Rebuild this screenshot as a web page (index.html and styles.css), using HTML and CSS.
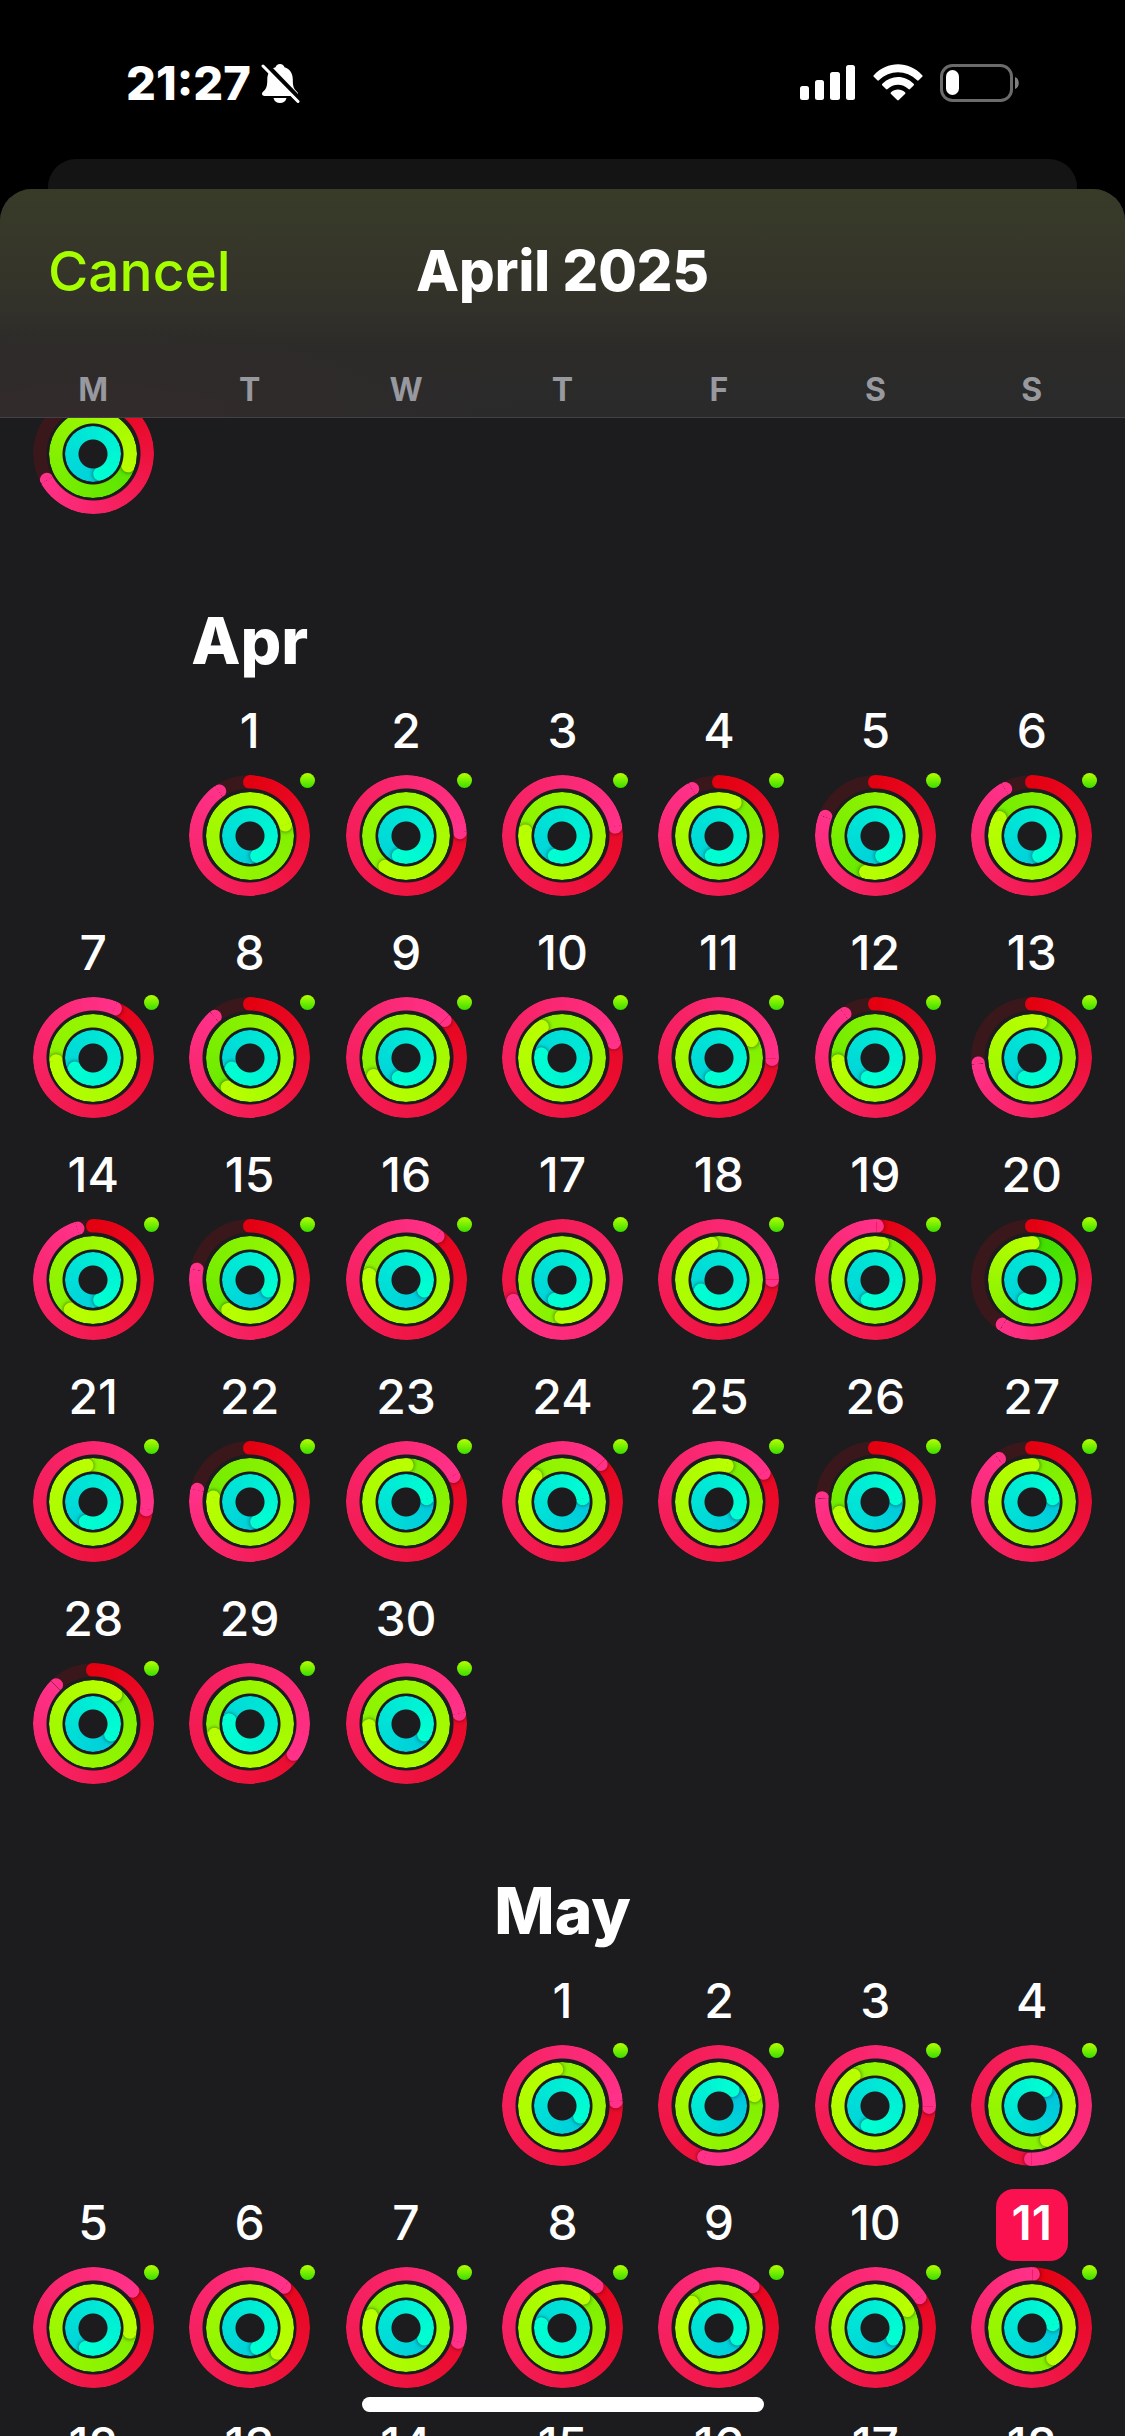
FILE: index.html
```
<!DOCTYPE html>
<html lang="en">
<head>
    <meta charset="UTF-8">
    <meta name="viewport" content="width=device-width, initial-scale=1.0">
    <title>Activity Calendar</title>
    <link rel="stylesheet" href="styles.css">
</head>
<body>
    <div class="status-bar">
        <div class="status-left">
            <span class="time">21:27</span>
            <svg class="bell" viewBox="0 0 40 42" width="40" height="42">
                <path d="M20 2c2.400 0 4 1.500 4.500 3.300 5.500 1.800 8.300 6.200 8.300 12 0 8 1.200 9.700 4.400 12.700 1.600 1.600.8 4-1.600 4H4.600c-2.600 0-3.400-2.600-1.600-4.200 3.200-2.900 4.300-5 4.300-12.500 0-5.800 2.700-10.200 8.200-12C16 3.500 17.600 2 20 2z" fill="#fff"/>
                <path d="M13.500 36h13c-.6 3.300-3.300 5-6.500 5s-5.900-1.700-6.500-5z" fill="#fff"/>
                <path d="M5 1.500l35 36" stroke="#000" stroke-width="5"/>
                <path d="M3 4l35 35.500" stroke="#fff" stroke-width="3" stroke-linecap="round"/>
            </svg>
        </div>
        <div class="status-right">
            <svg viewBox="0 0 56 36" width="56" height="36" fill="#fff">
                <rect x="0" y="21" width="9" height="14" rx="2.500"/>
                <rect x="15" y="15" width="9" height="20" rx="2.500"/>
                <rect x="30" y="7" width="10" height="28" rx="2.500"/>
                <rect x="46" y="0" width="9" height="35" rx="2.500"/>
            </svg>
            <svg viewBox="0 0 50 37" width="50" height="37" fill="#fff">
                <path d="M.8 11.200C14.500-3.300 35.500-3.300 49.200 11.200c.6.6.6 1 0 1.600l-3.500 3.500c-.6.6-1 .6-1.600 0-10.800-10.800-27.400-10.800-38.200 0-.6.6-1 .6-1.600 0L.8 12.800c-.6-.6-.6-1 0-1.600z"/>
                <path d="M9.400 19.800c8.800-9.100 22.400-9.100 31.200 0 .6.600.6 1 0 1.600l-3.600 3.600c-.6.600-1 .6-1.600 0-5.900-5.700-14.900-5.700-20.800 0-.6.600-1 .6-1.600 0l-3.600-3.600c-.6-.6-.6-1 0-1.600z"/>
                <path d="M18 28.300c4-3.800 10-3.800 14 0 .6.600.6 1 0 1.600l-6.200 6.200c-.6.600-1 .6-1.600 0L18 29.900c-.6-.6-.6-1 0-1.600z"/>
            </svg>
            <svg viewBox="0 0 80 38" width="80" height="38">
                <rect x="1.500" y="1.500" width="70" height="35" rx="11" fill="none" stroke="#6b6b6b" stroke-width="3"/>
                <rect x="6" y="6" width="13" height="25" rx="6.500" fill="#fff"/>
                <path d="M75 13c5 1.500 5 10.500 0 12z" fill="#808080"/>
            </svg>
        </div>
    </div>

    <div class="back-sheet"></div>

    <div class="sheet">
        <header class="sheet-header">
            <div class="title-bar">
                <button class="cancel" type="button">Cancel</button>
                <h1>April 2025</h1>
            </div>
            <div class="weekdays">
                <span>M</span>
                <span>T</span>
                <span>W</span>
                <span>T</span>
                <span>F</span>
                <span>S</span>
                <span>S</span>
            </div>
        </header>
        <main class="months" id="months">
            <!-- Months are added by script.js -->
        </main>
    </div>

    <div class="home-indicator"></div>

    <script src="script.js"></script>
</body>
</html>
```
FILE: styles.css
```
* {
    box-sizing: border-box;
}
body {
    margin: 0;
    height: 100vh;
    display: flex;
    flex-direction: column;
    background-color: #000;
    color: #fff;
    font-family: Inter, "Liberation Sans", sans-serif;
}
button {
    border: none;
    padding: 0;
    background: none;
    color: inherit;
    font: inherit;
    cursor: pointer;
}

/* Status bar */
.status-bar {
    flex: none;
    display: flex;
    justify-content: space-between;
    align-items: center;
    height: 159px;
    padding: 6px 105px 0 126px;
}
.status-left {
    display: flex;
    align-items: center;
    gap: 9px;
}
.time {
    font-size: 47px;
    font-weight: 800;
}
.status-right {
    display: flex;
    align-items: center;
    gap: 17px;
}

/* Sheets */
.back-sheet {
    flex: none;
    height: 30px;
    margin: 0 48px;
    border-radius: 28px 28px 0 0;
    background-color: #141414;
}
.sheet {
    flex: 1;
    min-height: 0;
    display: flex;
    flex-direction: column;
    border-radius: 32px 32px 0 0;
    background-color: #1c1c1e;
    overflow: hidden;
}
.sheet-header {
    flex: none;
    background: radial-gradient(ellipse at 8% 100%, #332b2b, transparent 30%), linear-gradient(#383b28, #34332a 45%, #2c2b29 70%, #2a2a2b);
    border-bottom: 1px solid #424244;
}
.title-bar {
    display: grid;
    grid-template-columns: 1fr auto 1fr;
    align-items: center;
    height: 164px;
    padding: 0 48px;
}
.cancel {
    justify-self: start;
    color: #a6ff00;
    font-size: 55px;
    font-weight: 500;
}
.title-bar h1 {
    margin: 0;
    font-size: 56px;
    font-weight: 800;
}
.weekdays {
    display: grid;
    grid-template-columns: repeat(7, 1fr);
    height: 64px;
    padding: 0 15px;
    line-height: 74px;
    text-align: center;
    color: #98989f;
    font-size: 32px;
    font-weight: 700;
}

/* Calendar */
.months {
    flex: 1;
    overflow-y: auto;
    scrollbar-width: none;
}
.month {
    scroll-margin-top: 119px;
}
.month-title,
.days {
    display: grid;
    grid-template-columns: repeat(7, 1fr);
    padding: 0 15px;
}
.month-title {
    height: 160px;
    padding-top: 64px;
}
.month-title h2 {
    justify-self: center;
    margin: 0;
    font-size: 64px;
    font-weight: 800;
    line-height: 80px;
}
.days {
    grid-auto-rows: 222px;
}
.day {
    display: flex;
    flex-direction: column;
    align-items: center;
    gap: 6px;
}
.date {
    width: 72px;
    height: 72px;
    border-radius: 18px;
    line-height: 68px;
    text-align: center;
    font-size: 48px;
    font-weight: 500;
}
.today .date {
    background-color: #fb114f;
    font-weight: 600;
}

/* Activity rings */
.rings {
    position: relative;
    display: grid;
    place-items: center;
    width: 121px;
    height: 121px;
}
.ring {
    grid-area: 1 / 1;
    position: relative;
    width: var(--size);
    height: var(--size);
    border-radius: 50%;
    background: conic-gradient(var(--start) 0deg, var(--end) var(--angle), var(--track) var(--angle));
    -webkit-mask: radial-gradient(closest-side, transparent calc(100% - 14px), #000 calc(100% - 13px));
    mask: radial-gradient(closest-side, transparent calc(100% - 14px), #000 calc(100% - 13px));
}
/* More than one lap: the first lap lies under the last one */
.ring.lapped {
    background: conic-gradient(from var(--angle), var(--start) calc(360deg - var(--angle)), var(--end) 360deg);
}
.move {
    --size: 121px;
    --start: #e30010;
    --end: #ff3189;
    --track: #3a171b;
}
.exercise {
    --size: 88px;
    --start: #3bdd00;
    --end: #b9ff00;
    --track: #1f3a10;
}
.stand {
    --size: 56px;
    --start: #00bade;
    --end: #00ffd2;
    --track: #0c3538;
}
.head {
    position: absolute;
    inset: 0;
    transform: rotate(var(--angle));
    clip-path: inset(0 0 0 50%);
}
.head::after,
.ring:not(.lapped)::before {
    content: "";
    position: absolute;
    top: 0;
    left: calc(50% - 7px);
    width: 14px;
    height: 14px;
    border-radius: 50%;
    background-color: var(--end);
}
.ring:not(.lapped)::before {
    background-color: var(--start);
}
.lapped .head::after {
    box-shadow: 0 0 4px rgba(0, 0, 0, 0.6);
}
.badge {
    position: absolute;
    top: -2px;
    right: -5px;
    width: 15px;
    height: 15px;
    border-radius: 50%;
    background: linear-gradient(#b4ff00, #3bdd00);
}

.home-indicator {
    position: fixed;
    left: 50%;
    bottom: 24px;
    width: 402px;
    height: 15px;
    margin-left: -201px;
    border-radius: 8px;
    background-color: #fff;
}
```
FILE: script.js
```
const STAND_GOAL = 9;
const TODAY = 'May 11';

// Each day is [move degrees, exercise degrees, stand hours]
const months = [
    {
        name: 'Mar', firstDay: 31, column: 1, days: [
            [240, 468, 13]
        ]
    },
    {
        name: 'Apr', title: true, firstDay: 1, column: 2, days: [
            [325, 792, 13], [446, 934, 14], [440, 997, 14], [330, 745, 14], [290, 554, 13], [330, 659, 13],
            [383, 985, 15], [319, 577, 15], [405, 961, 14], [433, 1047, 16], [451, 781, 14], [324, 625, 14], [263, 733, 14],
            [342, 937, 13], [280, 576, 12], [395, 998, 12], [606, 901, 14], [450, 1068, 15], [361, 731, 14], [212, 361, 14],
            [458, 1070, 14], [282, 637, 13], [421, 721, 11], [405, 1034, 11], [417, 732, 12], [273, 613, 11], [322, 721, 11],
            [315, 757, 12], [484, 973, 16], [439, 987, 12]
        ]
    },
    {
        name: 'May', title: true, firstDay: 1, column: 4, days: [
            [445, 1071, 12], [555, 793, 10], [451, 1045, 14], [540, 876, 10],
            [406, 816, 14], [400, 852, 13], [465, 1009, 12], [399, 755, 16], [399, 1033, 12], [415, 781, 12], [361, 865, 11],
            null, null, null, null, null, null, null
        ]
    }
];

function ring(type, angle) {
    const lapped = angle >= 360 ? ' lapped' : '';
    return `<span class="ring ${type}${lapped}" style="--angle: ${angle}deg"><span class="head"></span></span>`;
}

function day(month, number, data) {
    const button = document.createElement('button');
    button.type = 'button';
    button.className = 'day';
    button.setAttribute('aria-label', `${month.name} ${number}`);
    if (`${month.name} ${number}` === TODAY) {
        button.classList.add('today');
    }
    // The tail of an untitled month only shows its rings
    button.innerHTML = `<span class="date">${month.title ? number : ''}</span>`;

    // Days to come have no rings yet
    if (data) {
        const [move, exercise, stand] = data;
        button.innerHTML += `<span class="rings">
            ${ring('move', move)}
            ${ring('exercise', exercise)}
            ${ring('stand', stand / STAND_GOAL * 360)}
            <span class="badge"></span>
        </span>`;
    }
    return button;
}

const list = document.getElementById('months');

months.forEach(month => {
    const section = document.createElement('section');
    section.className = 'month';
    section.id = month.name;

    // The title stands over the first day of the month
    if (month.title) {
        section.innerHTML = `<div class="month-title">
            <h2 style="grid-column: ${month.column}">${month.name}</h2>
        </div>`;
    }

    const days = document.createElement('div');
    days.className = 'days';
    month.days.forEach((data, i) => {
        days.appendChild(day(month, month.firstDay + i, data));
    });
    days.firstElementChild.style.gridColumn = month.column;

    section.appendChild(days);
    list.appendChild(section);
});

// Open on April
document.getElementById('Apr').scrollIntoView();
```
